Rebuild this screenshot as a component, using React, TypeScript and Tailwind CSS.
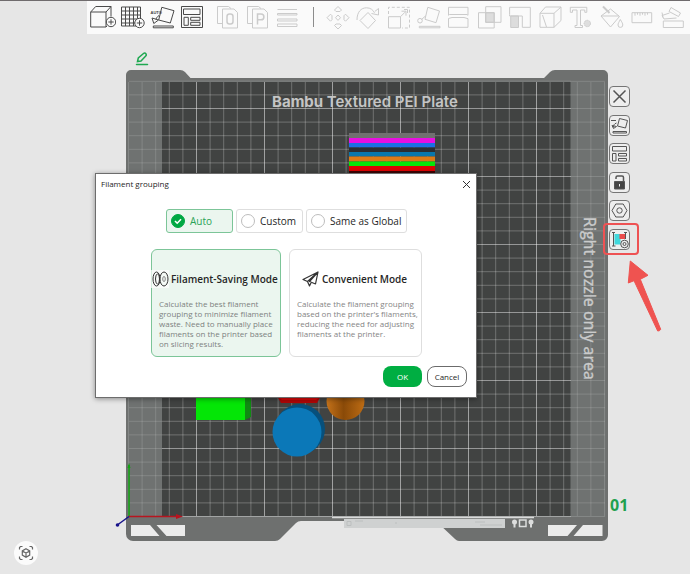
import { useState, type ReactNode } from "react";

const GRID_X = Array.from({ length: 36 }, (_, i) => 128.5 + i * 13.6);
const GRID_Y = Array.from({ length: 33 }, (_, i) => 516.5 - i * 13.6);

type Tool = { label: string; art: ReactNode };

const arrangeTools: Tool[] = [
  {
    label: "Add model",
    art: (
      <>
        <path d="M.7 7H16v15H.7zM.7 7l5-5.5H21L16 7M21 1.500v10M16 22l1-1" />
        <circle cx="21" cy="17" r="4.700" fill="#fafafa" />
        <path d="M18.300 17h5.400M21 14.300v5.400" />
      </>
    ),
  },
  {
    label: "Add plate",
    art: (
      <>
        <path d="M1.500 2h19v19h-19zM5.500 2v19M9.500 2v19M13.500 2v19M17.500 2v19M1.500 6h19M1.500 10h19M1.500 14h19M1.500 18h19" />
        <circle cx="19.500" cy="18" r="4.700" fill="#fafafa" />
        <path d="M16.800 18h5.400M19.500 15.300v5.400" />
      </>
    ),
  },
  {
    label: "Auto orient",
    art: (
      <>
        <path d="M11.800 2.300 24 5.700 20.300 18 8.700 15z" />
        <path d="M3.300 21h20v1.800h-20zM9 10.500c-1.500 1-2.500 2-3 4M2 13l1.800 5.500L8.500 15l-2.500-.8z" />
        <text x="0.500" y="8.500" fontSize="4" fontWeight="700" fill="#444" stroke="none" className="font-['Liberation_Sans',sans-serif]">
          AUTO
        </text>
      </>
    ),
  },
  {
    label: "Arrange",
    art: (
      <path d="M1.500 1.500h21v21h-21zM3.500 4H20v5.500H3.500zM4 12.300h4.300v8H4zM10.700 12.300H20v3h-9.300zM10.700 17.300H20v3h-9.300z" />
    ),
  },
];

const splitTools: Tool[] = [
  {
    label: "Split to objects",
    art: (
      <>
        <path d="M6 18.500H1.500v-17h11l2.500 2M6.500 4h11.500l3.500 3.500v15.500h-15z" />
        <rect x="11" y="9" width="6" height="10" rx="2.500" strokeWidth="1.500" />
      </>
    ),
  },
  {
    label: "Split to parts",
    art: (
      <>
        <path d="M6 18.500H1.500v-17h11l2.500 2M6.500 4h11.500l3.500 3.500v15.500h-15z" />
        <path d="M11.500 19.500V9H15a2.800 2.800 0 0 1 0 5.800h-3.500" strokeWidth="1.500" />
      </>
    ),
  },
  {
    label: "Variable layer height",
    art: <path d="M1.500 4.500h19.500M1.500 8.500h19.500v1.500H1.500zM1.500 14h19.500v2H1.500zM1.500 19h19.500v2.500H1.500z" />,
  },
];

const editTools: Tool[] = [
  {
    label: "Move",
    art: (
      <path d="m13 1.500 3.500 3.500-1.500 1.500h-4L9.500 5zM13 24l3.500-3.500L15 19h-4l-1.500 1.500zM2 12.700l3.500-3.500L7 10.700v4l-1.500 1.500zM24 12.700l-3.500-3.500-1.500 1.500v4l1.500 1.500zM13 10l2.500 2.700L13 15.400l-2.500-2.700z" />
    ),
  },
  {
    label: "Rotate",
    art: <path d="m13 7.500 7.500 8L13 23.500 5 15.500zM2 15C2 7 6 2.800 11.500 2.800c4 0 6.500 2 8 5M16.500 8.500l7 1.500V3.500l-3.500 2.800" />,
  },
  {
    label: "Scale",
    art: (
      <>
        <path d="M2.500 9V2.300H23.500V23H16" strokeDasharray="3 2" />
        <path d="M2.500 11.700h12V23h-12zM14.500 11.700l4.500-4.500M15.500 6.200h4.500v4.500M18 4.500h3.500v3.500" />
      </>
    ),
  },
  {
    label: "Lay on face",
    art: (
      <>
        <path d="M11.800 2.300 23.500 6 20 17.700 9 14.300zM3.300 21.300H24v1.500H3.300zM5.500 14.500 9.500 11" />
        <circle cx="4" cy="15.700" r="2.300" />
      </>
    ),
  },
  { label: "Cut", art: <path d="M2.500 2.300h19.500v8l-1-.8H3.500l-1 .8zM2.500 13.500 6 12.500h12l4 1.200v8.600H2.500z" /> },
  {
    label: "Mesh boolean",
    art: (
      <>
        <path d="M8.700 7.700h8.500v9.600H8.700z" fill="#dddddd" />
        <path d="M1.500 7.700h15.700V23H1.500zM8.700 1.700H24v15.600H8.700z" />
      </>
    ),
  },
  {
    label: "Support painting",
    art: (
      <>
        <path d="M3.700 11h7.800v11.500H3.700z" fill="#dcdcdc" />
        <path d="M2.600 9.500V2.300h20.700v20h-8V11H2.600z" />
      </>
    ),
  },
  {
    label: "Seam painting",
    art: <path d="M2 8.300h14v14H2zM2 8.300 7.500 2H23l-7 6.300M23 2v13.500l-7 6.800M4.500 10l4 12" />,
  },
  {
    label: "Text shape",
    art: (
      <>
        <path d="M2.300 2.300h16.500v5h-2V5h-4.300v15.500h2v2H7v-2h2V5H4.500v2.300H2.300z" />
        <circle cx="19.300" cy="18.500" r="3.200" fill="#dedede" strokeDasharray="1.500 .8" />
      </>
    ),
  },
  {
    label: "Color painting",
    art: (
      <>
        <path d="M3 11 12.500 4l9 7.500-9 10.500zM3 11h18" />
        <path d="m5 1.500 6.500 6.500" strokeWidth="2" />
        <path d="M22.300 14.500c1.500 2.500 2.500 4 2.500 5.500a2.400 2.400 0 0 1-4.800 0c0-1.500 1-3 2.300-5.500z" fill="#fafafa" />
      </>
    ),
  },
  {
    label: "Measure",
    art: <path d="M3 7.700h19.700v10H3zM6 7.700v3M8.500 7.700v2M11 7.700v3M13.500 7.700v2M16 7.700v3M18.500 7.700v2" />,
  },
  {
    label: "Assembly view",
    art: <path d="M4.300 16h20v6.500h-20zM12 2.500 21.500 8 19.500 11.500 10 6.500zM10.500 8 3 10.500l2 3.500 12.500-1M4 12.500l-1-5" />,
  },
];

function ToolbarButton({ tool, muted = false }: { tool: Tool; muted?: boolean }) {
  return (
    <button type="button" aria-label={tool.label} disabled={muted} className="shrink-0">
      <svg
        width="26"
        height="24"
        viewBox="0 0 26 24"
        fill="none"
        stroke={muted ? "#cbcbcb" : "#4a4a4a"}
        strokeWidth="1"
        className="block"
      >
        {tool.art}
      </svg>
    </button>
  );
}

const plateTools: Tool[] = [
  { label: "Remove plate", art: <path d="m4.500 4.500 12 12M16.500 4.500l-12 12" strokeWidth="1.500" /> },
  {
    label: "Orient plate",
    art: <path d="m10.500 3.500 8 2-2 7.500-8-2zM4 16.500h13.500v1.500H4zM2 5.500h5M7.500 8C5 9 4.500 10 4.500 12.500M3 10.500l1.500 3 3-2z" />,
  },
  {
    label: "Arrange plate",
    art: <path d="M3.500 3.500h14v4.500h-14zM3.500 10.500H7V18H3.500zM9.500 10.500h8v2.500h-8zM9.500 15.500h8V18h-8z" />,
  },
  {
    label: "Lock plate",
    art: (
      <>
        <path d="M7 7V5.500a1.500 1.500 0 0 1 1.500-1.500H13a1.500 1.500 0 0 1 1.500 1.500V10" strokeWidth="1.500" />
        <path d="M5.500 9.500h10v7.500h-10z" fill="#444" />
        <path d="M10.500 12v2.500" stroke="#eee" />
      </>
    ),
  },
  {
    label: "Plate settings",
    art: (
      <>
        <path d="M6.800 4h7.400l3.800 6.500-3.800 6.500H6.800L3 10.500z" />
        <circle cx="10.500" cy="10.500" r="2.700" />
      </>
    ),
  },
  {
    label: "Filament grouping",
    art: (
      <>
        <path d="M5.500 5h6v10.500h-6z" fill="#3fd8dc" stroke="none" />
        <path d="M10.500 5h5.500v5h-5.500z" fill="#ea4b4b" stroke="none" />
        <path d="M3 3.500h3M4.500 3.500V17M3 17h3.500M15 3.500h3M16.500 3.500V10" />
        <circle cx="15.500" cy="15" r="3.800" fill="#eeeeee" />
        <circle cx="15.500" cy="15" r="1.500" />
      </>
    ),
  },
];

function PlateScene() {
  return (
    <svg
      width="690"
      height="540"
      viewBox="0 34 690 540"
      className="absolute left-0 top-0"
      role="img"
      aria-label="Build plate with sliced models"
    >
      <defs>
        <linearGradient id="cone" x1="0" x2="1">
          <stop offset="0" stopColor="#c4721a" />
          <stop offset="0.45" stopColor="#8a4a08" />
          <stop offset="1" stopColor="#bd6c14" />
        </linearGradient>
      </defs>
      <path
        d="M126 75a5 5 0 0 1 5-5h49q3 0 5 2l5.500 6H544l6-6q2-2 5-2h48a5 5 0 0 1 5 5v460a6 6 0 0 1-6 6H459q-2 0-4-2l-17-16q-2-2-5-2H301q-3 0-5 2l-16 16q-2 2-5 2H133a7 7 0 0 1-7-7z"
        fill="#6e706f"
      />
      <path d="M133 81h468a5 5 0 0 1 5 5v431H128V86a5 5 0 0 1 5-5z" fill="#6f7271" />
      <path d="M162 81.500h408.500v435H162z" fill="#414342" />
      <g stroke="#ffffff">
        {GRID_X.map((x, i) => (
          <path
            key={x}
            d={`M${x} 82V516`}
            strokeOpacity={i < 3 || i > 32 ? 0.15 : i % 5 === 0 ? 0.5 : 0.25}
          />
        ))}
        {GRID_Y.map((y, i) => (
          <g key={y}>
            <path d={`M162 ${y}H571`} strokeOpacity={i % 5 === 0 ? 0.45 : 0.25} />
            <path d={`M129 ${y}H162M571 ${y}H605`} strokeOpacity="0.15" />
          </g>
        ))}
      </g>
      <text
        x="272"
        y="107"
        fontSize="15"
        fontWeight="700"
        fill="#c4c5c5"
        className="font-['Inter',sans-serif]"
      >
        Bambu <tspan fontWeight="600">Textured PEI Plate</tspan>
      </text>
      <text
        transform="translate(584 217) rotate(90)"
        fontSize="16"
        fontWeight="500"
        fill="#cacbcb"
        stroke="#cacbcb"
        strokeWidth="0.400"
        className="font-['Open_Sans',sans-serif]"
      >
        Right nozzle only area
      </text>

      <path d="M349 133h86v5h-86z" fill="#707070" />
      <path d="M349 138h86v5h-86z" fill="#e80fe0" />
      <path d="M349 143h86v4.500h-86z" fill="#1c6fe4" />
      <path d="M349 147.500h86v4.500h-86z" fill="#2c2e32" />
      <path d="M349 152h86v4.500h-86z" fill="#0a77ac" />
      <path d="M349 156.500h86v5h-86z" fill="#de7a16" />
      <path d="M349 161.500h86v4.500h-86z" fill="#05e60a" />
      <path d="M349 166h86v5h-86z" fill="#dd0303" />
      <path d="M349 171h86v4h-86z" fill="#3c0505" />

      <path d="M245 390h6v27l-6 3z" fill="#108a12" />
      <path d="M196 390h49v30h-49z" fill="#04e606" />
      <path d="M277 396h44l-4 7h-36z" fill="#b00606" />
      <path d="M277 396h44l-5 4h-34z" fill="#d90808" />
      <circle cx="300" cy="429" r="25" fill="#07507c" />
      <circle cx="297" cy="432" r="24.500" fill="#0b78b8" />
      <circle cx="345.500" cy="401" r="19" fill="url(#cone)" />

      <path d="M332 517.500h202" stroke="#d9dada" strokeWidth="1.500" />
      <path d="M344 519h161v9H344z" fill="#cfd1d1" />
      <path d="M347 521.500h4v4h-4zM355 521h8M395 523h2M475 522h10M480 525h22" fill="none" stroke="#bcbfbf" />
      <g fill="#dcdddd">
        <circle cx="514.500" cy="522" r="2.500" />
        <path d="M513.500 523h2v4.500h-2zM530 523h2v4.500h-2z" />
        <circle cx="531" cy="522" r="2.500" />
      </g>
      <path d="M519.500 520h6.500v6.500h-6.500z" fill="none" stroke="#dcdddd" strokeWidth="1.500" />

      <g fill="#ebebeb">
        <path d="M131 525h19l9.500 11H131zM156.500 525H185v11h-18.500z" />
        <path d="M548 525h29l-9.500 11H548zM583 525h19.500v11H573.500z" />
      </g>

      <path d="M129 516V465" stroke="#12a512" strokeWidth="1.500" />
      <path d="m127.500 468 1.500-5 1.500 5z" fill="#12a512" />
      <path d="M129 516.500h48" stroke="#b8141f" strokeWidth="1.500" />
      <path d="m176 514 7 2.500-7 2.500z" fill="#b8141f" />
      <path d="m129 516.500-11 8" stroke="#17128a" strokeWidth="1.500" />
      <circle cx="117.500" cy="525" r="1.800" fill="#17128a" />

      <g fill="none" stroke="#1fa851" strokeWidth="1.500" strokeLinecap="round">
        <path d="m137.500 61.500.8-3.500 5.200-4.500a1.500 1.500 0 0 1 2.200 2.500l-4.700 5zM136.500 64.500h11" />
      </g>
    </svg>
  );
}

const groupings = ["Auto", "Custom", "Same as Global"] as const;

function GroupingDialog() {
  const [grouping, setGrouping] = useState<string>("Auto");
  const [mode, setMode] = useState("saving");
  const cardBase = "flex flex-col items-start justify-start rounded-md border pt-5 text-left";
  const cardOn = "border-[#7cc598] bg-[#ebf6ef]";
  const cardOff = "border-[#dedede] bg-white";

  return (
    <section
      role="dialog"
      aria-labelledby="grouping-title"
      className="absolute left-[95px] top-[139px] w-[382px] border border-[#6d6d6d] bg-white pb-[10px] font-['Open_Sans',sans-serif] text-[#262626] shadow-[0_1px_5px_rgba(0,0,0,0.4)]"
    >
      <header className="flex h-5 items-center justify-between px-[5px]">
        <h1 id="grouping-title" className="text-[8px] leading-4">
          Filament grouping
        </h1>
        <button type="button" aria-label="Close" className="text-[#333]">
          <svg width="9" height="9" viewBox="0 0 9 9" stroke="currentColor" className="block">
            <path d="m1 1 7 7M8 1 1 8" />
          </svg>
        </button>
      </header>

      <div role="radiogroup" aria-label="Grouping" className="mt-[15px] flex gap-[3px] pl-[70px]">
        {groupings.map((name) => (
          <label
            key={name}
            className={`flex h-6 items-center gap-[5px] rounded-[3px] border pl-1 text-[10px] leading-4 ${
              name === "Same as Global" ? "w-[101px]" : "w-[67px]"
            } ${grouping === name ? "border-[#7cc598] bg-[#ebf6ef] text-[#2aa357]" : "border-[#dedede] bg-white"}`}
          >
            <span className="relative flex h-[14px] w-[14px] shrink-0">
              <input
                type="radio"
                name="grouping"
                checked={grouping === name}
                onChange={() => setGrouping(name)}
                className="h-[14px] w-[14px] appearance-none rounded-full border border-[#bdbdbd] bg-white checked:border-[#00a843] checked:bg-[#00a843]"
              />
              {grouping === name && (
                <svg
                  viewBox="0 0 14 14"
                  fill="none"
                  stroke="#fff"
                  strokeWidth="1.600"
                  className="pointer-events-none absolute inset-0"
                >
                  <path d="m4 7 2.200 2.200L10 5.300" />
                </svg>
              )}
            </span>
            <span className="whitespace-nowrap">{name}</span>
          </label>
        ))}
      </div>

      <div className="mt-4 flex gap-2 pl-[55px]">
        <button
          type="button"
          aria-pressed={mode === "saving"}
          onClick={() => setMode("saving")}
          className={`${cardBase} h-[108px] w-[130px] ${mode === "saving" ? cardOn : cardOff}`}
        >
          <span className="-ml-px flex items-center gap-[2px]">
            <span className="bg-white/70 py-[1px]">
              <svg width="18" height="16" viewBox="0 0 18 16" fill="none" stroke="#333" className="block">
                <ellipse cx="5.500" cy="8" rx="3.500" ry="7" />
                <ellipse cx="6.500" cy="8" rx="2" ry="5" />
                <ellipse cx="13" cy="8" rx="4" ry="7" fill="#f4faf6" />
                <ellipse cx="13" cy="8" rx="1.300" ry="2.500" stroke="#888" />
              </svg>
            </span>
            <span className="whitespace-nowrap text-[10px] font-semibold leading-4">Filament-Saving Mode</span>
          </span>
          <span className="mt-[11px] whitespace-nowrap pl-[7px] text-[8px] leading-[10px] text-[#7d827f]">
            Calculate the best filament
            <br />
            grouping to minimize filament
            <br />
            waste. Need to manually place
            <br />
            filaments on the printer based
            <br />
            on slicing results.
          </span>
        </button>
        <button
          type="button"
          aria-pressed={mode === "convenient"}
          onClick={() => setMode("convenient")}
          className={`${cardBase} h-[108px] w-[133px] ${mode === "convenient" ? cardOn : cardOff}`}
        >
          <span className="flex items-center gap-[3px] pl-3">
            <span className="py-[1px]">
              <svg
                width="17"
                height="16"
                viewBox="0 0 17 16"
                fill="none"
                stroke="#333"
                strokeWidth="1.200"
                strokeLinejoin="round"
                className="block"
              >
                <path d="M16 1 1 8.500l4.500 2zM16 1l-2.500 12-6-2.500zM16 1 5.500 10.500l2 4.500 1.800-3.700" />
              </svg>
            </span>
            <span className="whitespace-nowrap text-[10px] font-semibold leading-4">Convenient Mode</span>
          </span>
          <span className="mt-[11px] whitespace-nowrap pl-[7px] text-[8px] leading-[10px] text-[#858585]">
            Calculate the filament grouping
            <br />
            based on the printer's filaments,
            <br />
            reducing the need for adjusting
            <br />
            filaments at the printer.
          </span>
        </button>
      </div>

      <footer className="mt-[9px] flex justify-end gap-[5px] pr-[9px] text-[8px] leading-4">
        <button type="button" className="h-[21px] w-[39px] rounded-lg bg-[#00ae42] text-white">
          OK
        </button>
        <button type="button" className="h-[21px] w-10 rounded-lg border border-[#6b6b6b] bg-white">
          Cancel
        </button>
      </footer>
    </section>
  );
}

export default function App() {
  return (
    <main className="flex min-h-screen flex-col overflow-hidden border-t border-[#6f6b6d] bg-[#e6e6e6]">
      <header className="ml-[87px] flex h-[33px] items-start bg-[#fafafa] pl-[3px] pr-[5px] pt-1">
        <div className="flex gap-1">
          {arrangeTools.map((tool) => (
            <ToolbarButton key={tool.label} tool={tool} />
          ))}
        </div>
        <div className="ml-[10px] flex gap-1">
          {splitTools.map((tool) => (
            <ToolbarButton key={tool.label} tool={tool} muted />
          ))}
        </div>
        <span className="ml-[11px] mt-[2px] h-5 w-px bg-[#8c8c8c]" />
        <div className="ml-[11px] flex flex-1 justify-between">
          {editTools.map((tool) => (
            <ToolbarButton key={tool.label} tool={tool} muted />
          ))}
        </div>
      </header>

      <div className="relative flex-1">
        <PlateScene />

        <div className="absolute left-[609px] top-[52px] flex h-[164px] flex-col justify-between">
          {plateTools.map((tool) => (
            <button
              key={tool.label}
              type="button"
              aria-label={tool.label}
              className="rounded-sm border border-[#757575] bg-[#eeeeee]"
            >
              <svg width="19" height="19" viewBox="1 1 19 19" fill="none" stroke="#555" className="block">
                {tool.art}
              </svg>
            </button>
          ))}
        </div>

        <div className="pointer-events-none absolute left-[603px] top-[189px] h-8 w-9 rounded border-2 border-[#ee5253]" />
        <svg width="40" height="76" viewBox="624 258 40 76" className="pointer-events-none absolute left-[624px] top-[224px]">
          <path
            d="M630.300 261 648 275.300l-7.700 4 20.400 50q-1 2-3 1.700L634 280.700l-5.700 2.300z"
            fill="#ef5350"
            stroke="#ef5350"
            strokeLinejoin="round"
          />
        </svg>
        <span className="absolute left-[610px] top-[459px] font-['Open_Sans',sans-serif] text-[16px] font-bold leading-6 text-[#1fa14e]">
          01
        </span>

        <GroupingDialog />

        <button
          type="button"
          aria-label="Fit view"
          className="absolute left-[14px] top-[507px] flex h-6 w-6 items-center justify-center rounded-full bg-[#fbfbfb]"
        >
          <svg width="16" height="16" viewBox="0 0 16 16" fill="none" stroke="#666" strokeWidth="1.200">
            <path d="M1.500 4.500v-2l1-1h2M11.500 1.500h2l1 1v2M14.500 11.500v2l-1 1h-2M4.500 14.500h-2l-1-1v-2M8 3.800l3.700 2.100v4.200L8 12.200l-3.700-2.100V5.900zM4.300 5.900 8 8l3.700-2.100M8 8v4.200" />
          </svg>
        </button>
      </div>
    </main>
  );
}
